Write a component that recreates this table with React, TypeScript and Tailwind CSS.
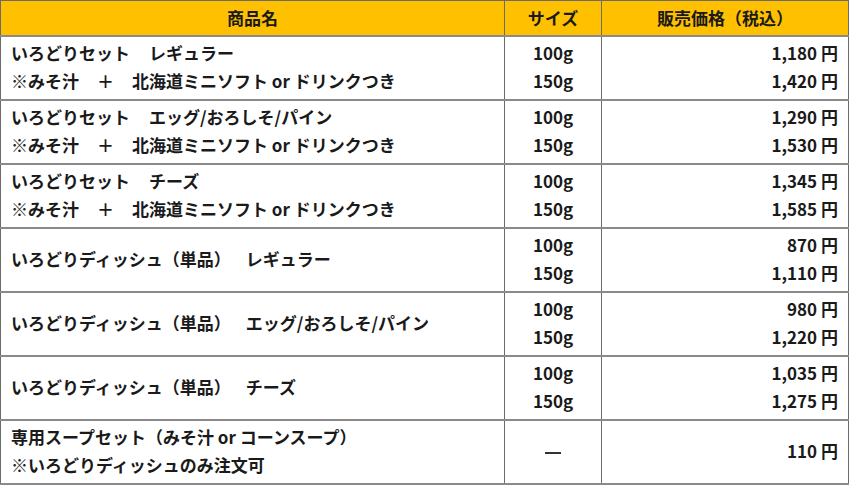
import React from "react";

type Row = {
  name: React.ReactNode;
  sizes: string[];
  prices: string[];
};

const setNote = (
  <div>
    ※みそ汁<span className="inline-block w-[18px]" />＋<span className="inline-block w-[18px]" />北海道ミニソフト or ドリンクつき
  </div>
);

const rows: Row[] = [
  {
    name: (
      <>
        <div>
          いろどりセット<span className="inline-block w-[19px]" />レギュラー
        </div>
        {setNote}
      </>
    ),
    sizes: ["100g", "150g"],
    prices: ["1,180 円", "1,420 円"],
  },
  {
    name: (
      <>
        <div>
          いろどりセット<span className="inline-block w-[19px]" />エッグ/おろしそ/パイン
        </div>
        {setNote}
      </>
    ),
    sizes: ["100g", "150g"],
    prices: ["1,290 円", "1,530 円"],
  },
  {
    name: (
      <>
        <div>
          いろどりセット<span className="inline-block w-[19px]" />チーズ
        </div>
        {setNote}
      </>
    ),
    sizes: ["100g", "150g"],
    prices: ["1,345 円", "1,585 円"],
  },
  {
    name: (
      <div>
        いろどりディッシュ（単品）<span className="inline-block w-[15px]" />レギュラー
      </div>
    ),
    sizes: ["100g", "150g"],
    prices: ["870 円", "1,110 円"],
  },
  {
    name: (
      <div>
        いろどりディッシュ（単品）<span className="inline-block w-[15px]" />エッグ/おろしそ/パイン
      </div>
    ),
    sizes: ["100g", "150g"],
    prices: ["980 円", "1,220 円"],
  },
  {
    name: (
      <div>
        いろどりディッシュ（単品）<span className="inline-block w-[15px]" />チーズ
      </div>
    ),
    sizes: ["100g", "150g"],
    prices: ["1,035 円", "1,275 円"],
  },
  {
    name: (
      <>
        <div>専用スープセット（みそ汁 or コーンスープ）</div>
        <div>※いろどりディッシュのみ注文可</div>
      </>
    ),
    sizes: ["—"],
    prices: ["110 円"],
  },
];

export default function App() {
  return (
    <div
      className="w-[850px] h-[487px] bg-white text-[#1a1a1a] font-bold text-[17px] leading-[28px]"
      style={{ fontFamily: '"Noto Sans CJK JP", "Noto Sans", sans-serif' }}
    >
      <table className="w-[849px] border-collapse table-fixed">
        <colgroup>
          <col className="w-[504px]" />
          <col className="w-[97px]" />
          <col />
        </colgroup>
        <thead>
          <tr className="h-[35px] bg-[#ffc000]">
            <th className="border border-[#6b6b6b] text-center font-bold leading-[24px]">商品名</th>
            <th className="border border-[#6b6b6b] text-center font-bold leading-[24px]">サイズ</th>
            <th className="border border-[#6b6b6b] text-center font-bold leading-[24px]">販売価格（税込）</th>
          </tr>
        </thead>
        <tbody>
          {rows.map((r, i) => (
            <tr key={i} className="h-[64px]">
              <td className="border-x border-x-[#6b6b6b] border-y-2 border-y-[#8a8a8a] pl-[10px] pb-[2px] align-middle">
                {r.name}
              </td>
              <td className="border-x border-x-[#6b6b6b] border-y-2 border-y-[#8a8a8a] text-center pb-[2px] align-middle">
                {r.sizes.map((s) =>
                  s === "—" ? (
                    <div key={s} className="font-normal">
                      <span className="inline-block w-[16px] h-[1.5px] bg-[#333] align-middle" />
                    </div>
                  ) : (
                    <div key={s}>{s}</div>
                  )
                )}
              </td>
              <td className="border-x border-x-[#6b6b6b] border-y-2 border-y-[#8a8a8a] text-right pr-[10px] pb-[2px] align-middle">
                {r.prices.map((p) => (
                  <div key={p}>{p}</div>
                ))}
              </td>
            </tr>
          ))}
        </tbody>
      </table>
    </div>
  );
}
